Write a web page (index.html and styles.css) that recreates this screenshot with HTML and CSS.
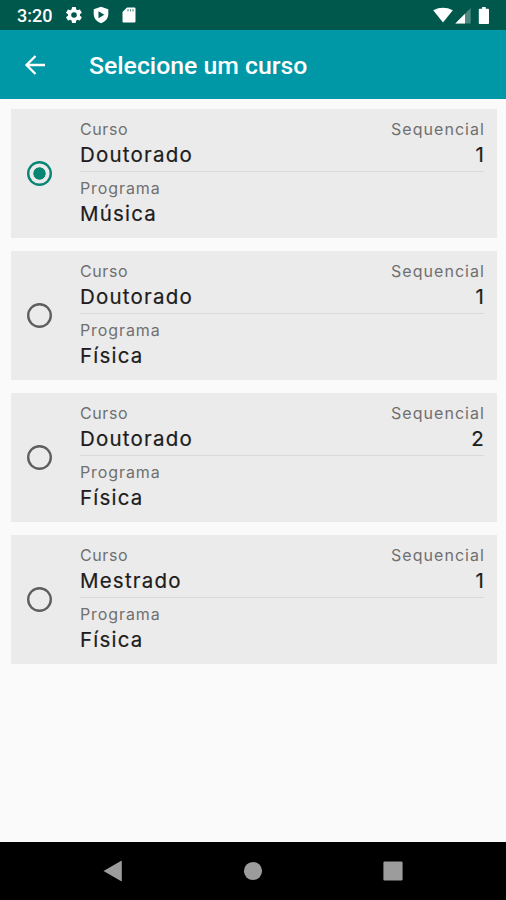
FILE: index.html
```html
<!DOCTYPE html>
<html lang="pt-BR">
<head>
<meta charset="utf-8">
<title>Selecione um curso</title>
<link rel="stylesheet" href="styles.css">
</head>
<body>
<div class="status">
  <span class="clock">3:20</span>
  <svg class="gear" width="16" height="16" viewBox="2 2 20 20"><path fill="#fff" fill-rule="evenodd" d="M19.4 13a7.500 7.500 0 0 0 0-2l2.100-1.600a.5.5 0 0 0 .1-.6l-2-3.500a.5.5 0 0 0-.6-.2l-2.500 1a7.300 7.300 0 0 0-1.700-1l-.4-2.600a.5.5 0 0 0-.5-.5h-4a.5.5 0 0 0-.5.5L9 5.100a7.700 7.700 0 0 0-1.700 1l-2.500-1a.5.5 0 0 0-.6.2l-2 3.500a.5.5 0 0 0 .1.600L4.500 11a8 8 0 0 0 0 2l-2.200 1.600a.5.5 0 0 0-.1.600l2 3.500c.1.200.4.300.6.200l2.500-1c.5.400 1.100.7 1.700 1l.4 2.600c0 .3.200.5.500.5h4c.3 0 .5-.2.500-.5l.4-2.600a7.300 7.300 0 0 0 1.700-1l2.500 1c.2.100.5 0 .6-.2l2-3.500a.5.5 0 0 0-.1-.6zM12 15.500a3.500 3.500 0 1 1 0-7 3.500 3.500 0 0 1 0 7z"/></svg>
  <svg class="shield" width="16" height="18" viewBox="0 0 16 18"><path fill="#fff" d="M8 .7 15.300 3.300V8c0 4.300-3 7.700-7.300 9.200C3.700 15.700.7 12.300.7 8V3.300z"/><path fill="#00574b" d="M5.500 5.200v7L11.300 8.700z"/></svg>
  <svg class="sd" width="14" height="16" viewBox="0 0 14 16"><path fill="#fff" d="M5 .5h7.200c.8 0 1.300.5 1.300 1.300v12.400c0 .8-.5 1.300-1.300 1.300H1.800c-.8 0-1.300-.5-1.300-1.300V5z"/><path stroke="#6c9c94" stroke-width="1.200" d="M6 2v2.500M8.500 2v2.500M11 2v2.500"/></svg>
  <svg class="signals" width="57" height="19" viewBox="0 0 57 19"><path fill="#fff" d="M.2 4.300Q10 -.6 19.800 4.300L10 16.500z"/><path fill="#4d8a81" d="M37.700 2v15.500H22.300z"/><path fill="#fff" d="M32 7.700v9.800h-9.700z"/><path fill="#fff" d="M49.100 1h3.600v1.700H55c.6 0 1 .4 1 1v13.300c0 .6-.4 1-1 1h-8.200c-.6 0-1-.4-1-1V3.700c0-.6.4-1 1-1h2.300z"/></svg>
</div>
<header class="appbar">
  <svg width="22" height="20" viewBox="0 0 22 20"><path fill="none" stroke="#fff" stroke-width="2.300" d="M21 10H2.500M11.500 1 2.500 10l9 9"/></svg>
  <h1>Selecione um curso</h1>
</header>
<main>
  <section class="card">
    <div class="pick"><span class="radio on"></span></div>
    <div class="info">
      <div class="row"><div><p class="label">Curso</p><p class="value">Doutorado</p></div><div class="end"><p class="label seq">Sequencial</p><p class="value">1</p></div></div>
      <p class="label prog">Programa</p><p class="value">Música</p>
    </div>
  </section>
  <section class="card">
    <div class="pick"><span class="radio"></span></div>
    <div class="info">
      <div class="row"><div><p class="label">Curso</p><p class="value">Doutorado</p></div><div class="end"><p class="label seq">Sequencial</p><p class="value">1</p></div></div>
      <p class="label prog">Programa</p><p class="value">Física</p>
    </div>
  </section>
  <section class="card">
    <div class="pick"><span class="radio"></span></div>
    <div class="info">
      <div class="row"><div><p class="label">Curso</p><p class="value">Doutorado</p></div><div class="end"><p class="label seq">Sequencial</p><p class="value">2</p></div></div>
      <p class="label prog">Programa</p><p class="value">Física</p>
    </div>
  </section>
  <section class="card">
    <div class="pick"><span class="radio"></span></div>
    <div class="info">
      <div class="row"><div><p class="label">Curso</p><p class="value">Mestrado</p></div><div class="end"><p class="label seq">Sequencial</p><p class="value">1</p></div></div>
      <p class="label prog">Programa</p><p class="value">Física</p>
    </div>
  </section>
</main>
<nav class="navbar">
  <svg width="20" height="22" viewBox="0 0 20 22"><path fill="#9c9c9c" d="M.5 11 17.800 .9q1-.5 1 .6v19q0 1.100-1 .6z"/></svg>
  <svg width="20" height="20" viewBox="0 0 20 20"><circle cx="10" cy="10" r="9.100" fill="#9c9c9c"/></svg>
  <svg width="20" height="20" viewBox="0 0 20 20"><rect x=".4" y=".4" width="19.200" height="19.200" rx="1.300" fill="#9c9c9c"/></svg>
</nav>
</body>
</html>
```
FILE: styles.css
```css
* { box-sizing: border-box; }
body {
  margin: 0;
  height: 900px;
  display: flex;
  flex-direction: column;
  background: #fafafa;
  font-family: Inter, "Liberation Sans", sans-serif;
  overflow: hidden;
}
p, h1 { margin: 0; }
svg { display: block; flex: none; }

.status {
  height: 30px;
  display: flex;
  align-items: center;
  padding: 0 16px 0 17px;
  background: #00574b;
}
.clock {
  width: 49px;
  font: 500 18px/30px Roboto, sans-serif;
  color: #fff;
  padding-top: 2px;
}
.shield { margin-left: 11px; }
.sd { margin-left: 13px; }
.signals { margin-left: auto; }

.appbar {
  height: 69px;
  display: flex;
  align-items: center;
  gap: 43px;
  padding-left: 24px;
  background: #0097a7;
  color: #fff;
}
.appbar h1 {
  font: 500 24.800px/30px Roboto, sans-serif;
  padding-top: 2px;
}

main {
  flex: 1;
  display: flex;
  flex-direction: column;
  gap: 13px;
  padding: 10px 9px 0 11px;
}
.card {
  height: 129px;
  display: flex;
  padding: 10px 13px 0 0;
  background: #ebebeb;
}
.pick {
  width: 69px;
  padding: 42px 0 0 16px;
}
.radio {
  display: block;
  width: 25px;
  height: 25px;
  box-shadow: inset 0 0 0 2.400px #5f5f5f;
  border-radius: 50%;
}
.radio.on {
  box-shadow: inset 0 0 0 2.400px #098673;
  background: radial-gradient(circle, #098673 5.800px, transparent 6.500px);
}
.info { flex: 1; }
.row {
  display: flex;
  justify-content: space-between;
  height: 53px;
  margin-bottom: 6px;
  border-bottom: 1px solid #dadada;
}
.end { text-align: right; }
.label {
  font-size: 16px;
  line-height: 20px;
  letter-spacing: .6px;
  color: #707070;
}
.label.prog { letter-spacing: .9px; }
.label.seq { letter-spacing: 1.050px; margin-right: -1px; }
.value {
  margin-top: 2px;
  font-size: 20.500px;
  line-height: 28px;
  letter-spacing: 1.200px;
  color: #1c1c1c;
  -webkit-text-stroke: .2px #1c1c1c;
}
.end .value { margin-right: -1px; }

.navbar {
  height: 58px;
  display: flex;
  justify-content: space-between;
  align-items: center;
  padding: 0 103px;
  background: #000;
}
```
